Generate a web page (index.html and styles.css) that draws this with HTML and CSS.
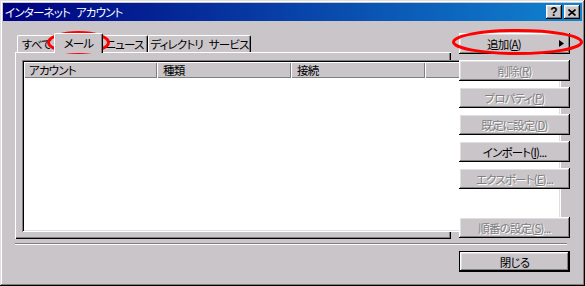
FILE: index.html
```html
<!DOCTYPE html>
<html lang="ja">

<head>
  <meta charset="UTF-8">
  <title>インターネット アカウント</title>
  <link rel="stylesheet" href="styles.css">
</head>

<body>
  <div class="window">
    <div class="titlebar">
      <span class="title">インターネット アカウント</span>
      <div class="caption-btns">
        <button class="cap help">?</button>
        <button class="cap">
          <svg width="8" height="7" viewBox="0 0 8 7"><path d="M0.5 0.5 L7.5 6.5 M7.5 0.5 L0.5 6.5" stroke="#000" stroke-width="1.6" fill="none"/></svg>
        </button>
      </div>
    </div>

    <div class="main">
      <div class="left">
        <div class="tabs">
          <div class="tab t-all">すべて</div>
          <div class="tab t-mail selected">メール</div>
          <div class="tab t-news">ニュース</div>
          <div class="tab t-dir">ディレクトリ サービス</div>
        </div>
        <div class="panel">
          <div class="list">
            <div class="list-head">
              <div class="col first">アカウント</div>
              <div class="col">種類</div>
              <div class="col">接続</div>
              <div class="col rest"></div>
            </div>
          </div>
        </div>
      </div>

      <div class="actions">
        <button class="btn add">
          <span class="label">追加(<u>A</u>)</span>
          <svg class="arrow" width="5" height="7" viewBox="0 0 5 7"><path d="M0 0 L5 3.5 L0 7 Z" fill="#000"/></svg>
        </button>
        <button class="btn" disabled>削除(<u>R</u>)</button>
        <button class="btn" disabled>プロパティ(<u>P</u>)</button>
        <button class="btn" disabled>既定に設定(<u>D</u>)</button>
        <button class="btn">インポート(<u>I</u>)...</button>
        <button class="btn" disabled>エクスポート(<u>E</u>)...</button>
        <button class="btn last" disabled>順番の設定(<u>S</u>)...</button>
      </div>
    </div>

    <div class="sep"></div>

    <div class="footer">
      <button class="btn default">閉じる</button>
    </div>

    <svg class="marks" width="585" height="286" viewBox="0 0 585 286">
      <ellipse cx="78.5" cy="42.5" rx="30" ry="10" fill="none" stroke="#f00" stroke-width="3"/>
      <ellipse cx="517.5" cy="42" rx="64" ry="11.5" fill="none" stroke="#f00" stroke-width="3"/>
    </svg>
  </div>
</body>

</html>
```

FILE: styles.css
```css
body {
  margin: 0;
  background-color: #c9c5c9;
  font-family: "Noto Sans CJK JP", sans-serif;
  font-size: 11.5px;
  letter-spacing: -0.8px;
  word-spacing: 4px;
  font-feature-settings: "palt";
  color: #000;
}

.window {
  position: relative;
  width: 585px;
  height: 286px;
  box-sizing: border-box;
  padding: 3px;
  background-color: #c9c5c9;
  box-shadow: inset -1px -1px #000, inset 1px 1px #dfdfdf, inset -2px -2px #808080, inset 2px 2px #fff;
}

.titlebar {
  height: 18px;
  display: flex;
  align-items: center;
  justify-content: space-between;
  padding: 0 2px;
  background: linear-gradient(to right, #000080, #1084d0);
  color: white;
}

.title {
  line-height: 18px;
}

.caption-btns {
  display: flex;
  gap: 2px;
}

.cap {
  width: 16px;
  height: 14px;
  padding: 0;
  border: none;
  display: flex;
  align-items: center;
  justify-content: center;
  background-color: #c9c5c9;
  box-shadow: inset -1px -1px #000, inset 1px 1px #fff, inset -2px -2px #808080, inset 2px 2px #dfdfdf;
}

.cap.help {
  font-family: "Liberation Sans", sans-serif;
  font-weight: bold;
  font-size: 12px;
  line-height: 12px;
  color: #000;
}

.main {
  display: flex;
  gap: 8px;
  padding: 12px 12px 0;
}

.left {
  width: 436px;
  display: flex;
  flex-direction: column;
}

.tabs {
  display: flex;
  align-items: flex-end;
  height: 19px;
  padding-left: 2px;
}

.tab {
  height: 17px;
  box-sizing: border-box;
  border-top: 1px solid #fff;
  border-left: 1px solid #fff;
  border-right: 1px solid #000;
  border-radius: 2px 2px 0 0;
  box-shadow: inset -1px 0 #808080;
  background-color: #c9c5c9;
  text-align: center;
  line-height: 17px;
  white-space: nowrap;
}

.t-all { width: 39px; }
.t-mail { width: 45px; }
.t-news { width: 47px; }
.t-dir { width: 103px; }

.tab.selected {
  position: relative;
  z-index: 1;
  width: 49px;
  height: 20px;
  margin: 0 -2px -1px;
  line-height: 18px;
}

.panel {
  height: 187px;
  box-sizing: border-box;
  padding: 8px 7px 7px;
  display: flex;
  box-shadow: inset 1px 1px #fff, inset -1px -1px #000, inset -2px -2px #808080;
}

.list {
  flex: 1;
  padding: 2px;
  background-color: white;
  box-shadow: inset 1px 1px #808080, inset -1px -1px #fff, inset 2px 2px #000, inset -2px -2px #dfdfdf;
}

.list-head {
  display: flex;
  height: 16px;
}

.col {
  width: 134px;
  box-sizing: border-box;
  padding-left: 6px;
  background-color: #c9c5c9;
  box-shadow: inset 1px 1px #fff, inset -1px -1px #808080;
  line-height: 16px;
}

.col.first {
  width: 133px;
  padding-left: 5px;
}

.col.rest {
  flex: 1;
}

.actions {
  width: 111px;
  display: flex;
  flex-direction: column;
  gap: 6px;
}

.btn {
  height: 21px;
  padding: 0;
  border: none;
  font: inherit;
  letter-spacing: -0.8px;
  font-feature-settings: "palt";
  color: #000;
  background-color: #c9c5c9;
  box-shadow: inset -1px -1px #000, inset 1px 1px #fff, inset -2px -2px #808080, inset 2px 2px #dfdfdf;
}

.btn:disabled {
  color: #808080;
  text-shadow: 1px 1px 0 #fff;
}

.btn.add {
  display: flex;
  align-items: center;
}

.btn.add .label {
  flex: 1;
  text-align: center;
}

.btn.add .arrow {
  margin: 0 6px 0 10px;
}

.btn.last {
  margin-top: auto;
  margin-bottom: 1px;
}

.btn.default {
  width: 111px;
  box-shadow: inset -1px -1px #000, inset 1px 1px #000, inset -2px -2px #000, inset 2px 2px #fff, inset -3px -3px #808080, inset 3px 3px #dfdfdf;
}

.sep {
  margin: 4px 15px 0 12px;
  border-top: 1px solid #808080;
  border-bottom: 1px solid #fff;
}

.footer {
  display: flex;
  justify-content: flex-end;
  padding: 6px 12px 0;
}

.marks {
  position: absolute;
  left: 0;
  top: 0;
  pointer-events: none;
}
```
